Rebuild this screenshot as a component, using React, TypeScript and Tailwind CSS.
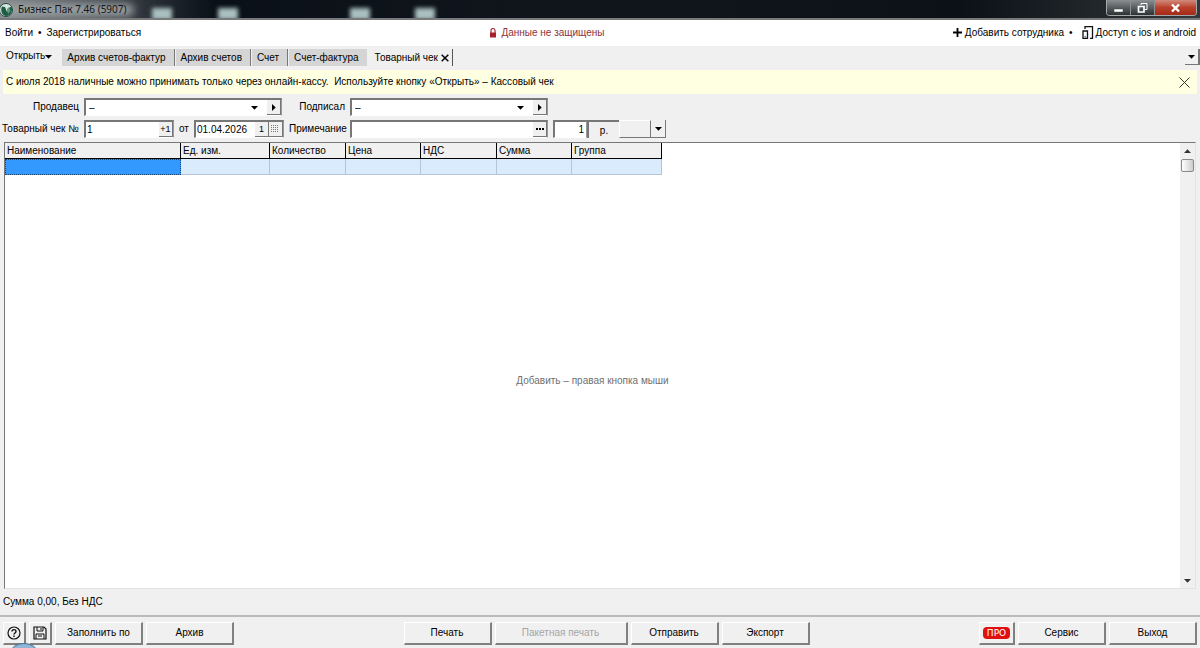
import type { ReactNode } from "react";
import { clsx } from "clsx";

const TABS = ["Архив счетов-фактур", "Архив счетов", "Счет", "Счет-фактура"];

const COLUMNS = [
  { title: "Наименование", width: 176 },
  { title: "Ед. изм.", width: 89 },
  { title: "Количество", width: 76 },
  { title: "Цена", width: 75 },
  { title: "НДС", width: 76 },
  { title: "Сумма", width: 75 },
  { title: "Группа", width: 90 },
];

function Triangle({ dir = "down" }: { dir?: "down" | "up" | "right" }) {
  return (
    <svg
      width="7"
      height="7"
      viewBox="0 0 7 7"
      className={clsx("shrink-0", dir === "up" && "rotate-180", dir === "right" && "-rotate-90")}
    >
      <path d="M0 2h7L3.500 5.700z" fill="currentColor" />
    </svg>
  );
}

// Утопленная рамка поля
function Sunken({ children, className }: { children?: ReactNode; className?: string }) {
  return (
    <div
      className={clsx(
        "flex h-[18px] border-t-2 border-r border-b border-l-2 border-t-[#777] border-r-[#999] border-b-white border-l-[#777] bg-white",
        className
      )}
    >
      {children}
    </div>
  );
}

function MiniButton({ label, children }: { label: string; children: ReactNode }) {
  return (
    <button
      type="button"
      aria-label={label}
      className="flex w-[14px] shrink-0 items-center justify-center border-r border-b border-[#777] bg-[#f0f0f0] text-[9px] leading-none"
    >
      {children}
    </button>
  );
}

// Выпуклая кнопка нижней панели
function PanelButton({
  children,
  className = "w-[88px]",
  label,
  disabled,
}: {
  children: ReactNode;
  className?: string;
  label?: string;
  disabled?: boolean;
}) {
  return (
    <button
      aria-label={label}
      disabled={disabled}
      className={clsx(
        "flex h-[23px] items-center justify-center border-t border-r-2 border-b-2 border-l border-t-white border-r-[#808080] border-b-[#808080] border-l-white bg-[#f0f0f0] disabled:text-[#a5a5a5]",
        className
      )}
    >
      {children}
    </button>
  );
}

function TitleBar() {
  return (
    <header className="relative flex h-5 shrink-0 justify-between overflow-hidden border-b-2 border-[#77797b] bg-linear-to-r from-[#858a8c] via-[#0a1018] via-18% to-[#1c2226] to-80%">
      <div className="absolute inset-0 bg-linear-to-r from-transparent from-10% via-[#0b1117] via-80% to-[#34383a]" />
      <div className="absolute top-2 left-[152px] h-3 w-5 bg-[#a9bfc0] blur-[2px]" />
      <div className="absolute top-2 left-[218px] h-3 w-5 bg-[#a9bfc0] blur-[2px]" />
      <div className="absolute top-2 left-[350px] h-3 w-5 bg-[#a9bfc0] blur-[2px]" />
      <div className="absolute top-2 left-[415px] h-3 w-5 bg-[#a9bfc0] blur-[2px]" />
      <div className="absolute top-1 left-0 h-3 w-[134px] rounded-full bg-[#9da3a5] blur-[4px]" />

      <div className="relative flex items-center gap-1">
        <svg width="14" height="16" viewBox="0 0 14 16">
          <circle cx="6" cy="9" r="6.500" fill="#dce9e2" stroke="#1e4a3b" />
          <path d="M2 5.500l3 .5 2 5 1.500-4 3-1.500c1.500 5-.5 9-5 9.500C2 14.500 0 10 2 5.500z" fill="#1f5c46" />
          <path d="M7 8l2-2 1.500 4-2.500 3z" fill="#5c9c80" />
        </svg>
        <h1 className="font-['Noto_Sans',sans-serif] text-[10px] leading-4 text-[#151515]">
          Бизнес Пак 7.46 (5907)
        </h1>
      </div>

      <div className="relative mr-[3px] flex h-4 overflow-hidden rounded-b border-x border-b border-[#a5a8aa]">
        <button
          aria-label="Свернуть"
          className="flex w-[24px] items-center justify-center border-r border-[#8d9092] bg-linear-to-b from-[#8b8f91] to-[#2d3235]"
        >
          <svg width="11" height="12" viewBox="0 0 11 12">
            <path d="M1 7h9v3H1z" fill="#fff" stroke="#444" strokeWidth=".5" />
          </svg>
        </button>
        <button
          aria-label="Восстановить"
          className="flex w-[24px] items-center justify-center border-r border-[#8d9092] bg-linear-to-b from-[#8b8f91] to-[#2d3235]"
        >
          <svg width="11" height="12" viewBox="0 0 11 12" fill="none" stroke="#fff">
            <path d="M4 3V1.500h6v6H8" />
            <path d="M1.500 4.500h5.500v5.500H1.500z" strokeWidth="1.700" />
          </svg>
        </button>
        <button
          aria-label="Закрыть"
          className="flex w-[41px] items-center justify-center bg-linear-to-b from-[#d18a7c] via-[#b9402a] to-[#a52a17]"
        >
          <svg width="11" height="12" viewBox="0 0 11 12">
            <path d="M2 2.500l7 7M9 2.500l-7 7" stroke="#fff" strokeWidth="2.400" />
          </svg>
        </button>
      </div>
    </header>
  );
}

function AccountBar() {
  return (
    <nav className="flex h-[26px] shrink-0 items-center justify-between bg-white pr-1 pb-px pl-[5px]">
      <div className="flex items-center gap-[5px]">
        <a href="#login">Войти</a>
        <span>•</span>
        <a href="#register">Зарегистрироваться</a>
      </div>
      <a href="#protect" className="flex items-center gap-1 text-[#8e3238]">
        <svg width="8" height="10" viewBox="0 0 8 10">
          <path d="M2 5V2.500a2 2 0 0 1 4 0V5" fill="none" stroke="#a03038" strokeWidth="1.200" />
          <path d="M1 4.500h6V9.500H1z" fill="#a8222c" />
        </svg>
        Данные не защищены
      </a>
      <div className="flex items-center justify-end gap-[5px]">
        <a href="#employee" className="flex items-center gap-[3px]">
          <svg width="9" height="9" viewBox="0 0 9 9" stroke="#000" strokeWidth="1.800">
            <path d="M4.500 0v9M0 4.500h9" />
          </svg>
          Добавить сотрудника
        </a>
        <span>•</span>
        <a href="#mobile" className="ml-1 flex items-center gap-[2px]">
          <svg width="12" height="13" viewBox="0 0 12 13" fill="none" stroke="#111" strokeWidth="1.300">
            <path d="M3 3V.700h7.500v11.600H8M1 5h4.500v7.300H1z" />
            <path d="M2.500 10.800H4" strokeWidth=".8" />
          </svg>
          Доступ с ios и android
        </a>
      </div>
    </nav>
  );
}

function TabStrip() {
  return (
    <div className="flex h-6 shrink-0 items-start pt-[3px]">
      <button className="mr-[10px] ml-[6px] flex h-[14px] items-center">
        Открыть
        <Triangle />
      </button>
      {TABS.map((tab, i) => (
        <button
          key={tab}
          className={clsx(
            "mr-px flex h-[17px] items-center bg-[#d5d5d5] pr-2 pl-[5px]",
            i < TABS.length - 1 && "border-r border-[#777]"
          )}
        >
          {tab}
        </button>
      ))}
      <div className="flex h-[17px] items-center gap-[3px] border-r border-[#555] pr-[3px] pl-[7px]">
        <span>Товарный чек</span>
        <button aria-label="Закрыть вкладку">
          <svg width="8" height="8" viewBox="0 0 8 8" stroke="#000" strokeWidth="1.500">
            <path d="M.7.7l6.600 6.600M7.300.7L.7 7.300" />
          </svg>
        </button>
      </div>
      <button
        aria-label="Список вкладок"
        className="ml-auto flex h-4 w-[15px] items-center justify-center border-r-2 border-b border-[#777]"
      >
        <Triangle />
      </button>
    </div>
  );
}

function Notice() {
  return (
    <div className="mx-[3px] flex h-6 shrink-0 items-center justify-between bg-[#ffffe1] pr-[7px] pl-[3px]">
      <p className="whitespace-pre">
        {"С июля 2018 наличные можно принимать только через онлайн-кассу.  Используйте кнопку «Открыть» – Кассовый чек"}
      </p>
      <button aria-label="Скрыть сообщение">
        <svg width="11" height="11" viewBox="0 0 11 11" stroke="#333">
          <path d="M.5.5l10 10M10.500.5l-10 10" />
        </svg>
      </button>
    </div>
  );
}

function DocumentForm() {
  return (
    <form className="grid shrink-0 grid-cols-[79px_200px_56px_198px_auto] items-center gap-x-[5px] gap-y-1 pt-1 pb-1 whitespace-nowrap">
      <label htmlFor="seller" className="text-right">
        Продавец
      </label>
      <Sunken className="w-[198px]">
        <select id="seller" className="min-w-0 flex-1 appearance-none pl-[3px] outline-none">
          <option>–</option>
        </select>
        <span className="pointer-events-none flex w-4 items-center">
          <Triangle />
        </span>
        <MiniButton label="Открыть продавца">
          <Triangle dir="right" />
        </MiniButton>
      </Sunken>
      <label htmlFor="signer" className="text-right">
        Подписал
      </label>
      <Sunken>
        <select id="signer" className="min-w-0 flex-1 appearance-none pl-[3px] outline-none">
          <option>–</option>
        </select>
        <span className="pointer-events-none flex w-4 items-center">
          <Triangle />
        </span>
        <MiniButton label="Открыть подписавшего">
          <Triangle dir="right" />
        </MiniButton>
      </Sunken>
      <span />

      <label htmlFor="number" className="text-right">
        Товарный чек №
      </label>
      <div className="flex items-center justify-between">
        <Sunken className="w-[90px]">
          <input id="number" defaultValue="1" className="min-w-0 flex-1 pl-px outline-none" />
          <MiniButton label="Следующий номер">+1</MiniButton>
        </Sunken>
        <label htmlFor="date">от</label>
        <Sunken className="w-[90px]">
          <input id="date" defaultValue="01.04.2026" className="min-w-0 flex-1 pl-px outline-none" />
          <MiniButton label="Сегодня">1</MiniButton>
          <MiniButton label="Календарь">
            <svg width="8" height="8" viewBox="0 0 8 8" stroke="#a66" strokeDasharray="1 1">
              <path d="M0 .5h8M0 2.500h8M0 4.500h8M0 6.500h8" />
            </svg>
          </MiniButton>
        </Sunken>
      </div>
      <label htmlFor="note" className="text-right">
        Примечание
      </label>
      <Sunken>
        <input id="note" className="min-w-0 flex-1 pl-px outline-none" />
        <MiniButton label="Выбрать примечание">
          <svg width="8" height="2" viewBox="0 0 8 2">
            <path d="M0 0h2v2H0zM3 0h2v2H3zM6 0h2v2H6z" />
          </svg>
        </MiniButton>
      </Sunken>
      <div className="flex">
        <Sunken className="w-[34px]">
          <input aria-label="Курс" defaultValue="1" className="w-full min-w-0 pr-[2px] text-right outline-none" />
        </Sunken>
        <span className="flex h-[18px] w-8 items-end justify-center border-t-2 border-l-2 border-[#777] leading-[14px]">
          р.
        </span>
        <button
          type="button"
          aria-label="Валюта"
          className="h-[18px] w-8 border border-t-white border-r-[#777] border-b-[#777] border-l-white"
        />
        <button
          type="button"
          aria-label="Выбрать валюту"
          className="flex h-[18px] w-[15px] items-center justify-center border-r border-b border-[#777]"
        >
          <Triangle />
        </button>
      </div>
    </form>
  );
}

function ItemsGrid() {
  return (
    <main className="relative mr-1 ml-1 flex min-h-0 flex-1 border border-t-[#777] border-r-[#e3e3e3] border-b-[#e3e3e3] border-l-[#777] bg-white">
      <div className="flex-1">
        <table className="table-fixed border-separate border-spacing-0">
          <colgroup>
            {COLUMNS.map((c) => (
              <col key={c.title} style={{ width: c.width }} />
            ))}
          </colgroup>
          <thead>
            <tr>
              {COLUMNS.map((c) => (
                <th
                  key={c.title}
                  className="h-4 border-r border-b border-black bg-[#f0f0f0] pl-[2px] text-left leading-[14px] font-normal"
                >
                  {c.title}
                </th>
              ))}
            </tr>
          </thead>
          <tbody>
            <tr>
              {COLUMNS.map((c, i) => (
                <td
                  key={c.title}
                  className={clsx(
                    "h-4",
                    i === 0
                      ? "border border-dotted border-[#12457a] bg-[#3399ff]"
                      : "border-r border-b border-[#b4c6d6] bg-[#d9ebfd]"
                  )}
                />
              ))}
            </tr>
          </tbody>
        </table>
      </div>
      <p className="pointer-events-none absolute inset-x-0 top-[231px] pr-[15px] text-center text-[#707070]">
        Добавить – правая кнопка мыши
      </p>
      <div className="flex w-[15px] flex-col items-center bg-[#f0f0f0] text-[#333]">
        <button aria-label="Вверх" className="flex h-4 items-center">
          <Triangle dir="up" />
        </button>
        <div className="h-[13px] w-[13px] rounded-xs border border-[#888] bg-linear-to-r from-white to-[#ccc]" />
        <button aria-label="Вниз" className="mt-auto flex h-4 items-center">
          <Triangle />
        </button>
      </div>
    </main>
  );
}

function BottomBar() {
  return (
    <footer className="relative flex h-[33px] shrink-0 items-start justify-between overflow-hidden border-t-2 border-[#bbb] px-[3px] pt-[5px]">
      <div className="flex gap-[3px]">
        <PanelButton label="Справка" className="w-[23px]">
          <svg width="14" height="14" viewBox="0 0 14 14" fill="none" stroke="#111" strokeWidth="1.200">
            <circle cx="7" cy="7" r="6" />
            <path d="M5 5.500C5 3 9 3 9 5.500 9 7 7 7 7 8.600M7 9.600v1.400" strokeWidth="1.400" />
          </svg>
        </PanelButton>
        <PanelButton label="Сохранить" className="w-[23px]">
          <svg width="14" height="14" viewBox="0 0 14 14" fill="none" stroke="#111">
            <path d="M1 1h10l2 2v10H1z" strokeWidth="1.200" />
            <path d="M4 1v4h6V1M3 13V8h8v5M8 2v2M5 10h4" />
          </svg>
        </PanelButton>
        <PanelButton>Заполнить по</PanelButton>
        <PanelButton>Архив</PanelButton>
      </div>
      <div className="flex gap-[3px]">
        <PanelButton>Печать</PanelButton>
        <PanelButton className="w-[133px]" disabled>
          Пакетная печать
        </PanelButton>
        <PanelButton>Отправить</PanelButton>
        <PanelButton>Экспорт</PanelButton>
      </div>
      <div className="flex gap-[3px]">
        <PanelButton className="w-[36px]">
          <span className="flex h-3 w-[27px] items-center justify-center rounded-sm bg-[#e01010] font-['DejaVu_Sans',sans-serif] text-[9px] text-white">
            ПРО
          </span>
        </PanelButton>
        <PanelButton>Сервис</PanelButton>
        <PanelButton>Выход</PanelButton>
      </div>
      {/* Край кнопки «Пуск» под окном */}
      <svg className="pointer-events-none absolute bottom-0 left-[11px]" width="26" height="5" viewBox="0 0 26 5">
        <ellipse cx="13" cy="9" rx="13" ry="8.500" fill="#8fb6d6" stroke="#4a6f92" />
      </svg>
    </footer>
  );
}

export default function App() {
  return (
    <div className="flex h-screen flex-col bg-[#f0f0f0] font-['Liberation_Sans',Arial,sans-serif] text-[10px] leading-[14px] text-black">
      <TitleBar />
      <AccountBar />
      <TabStrip />
      <Notice />
      <DocumentForm />
      <ItemsGrid />
      <p className="flex h-[26px] shrink-0 items-center pl-[3px]">Сумма 0,00, Без НДС</p>
      <BottomBar />
    </div>
  );
}
